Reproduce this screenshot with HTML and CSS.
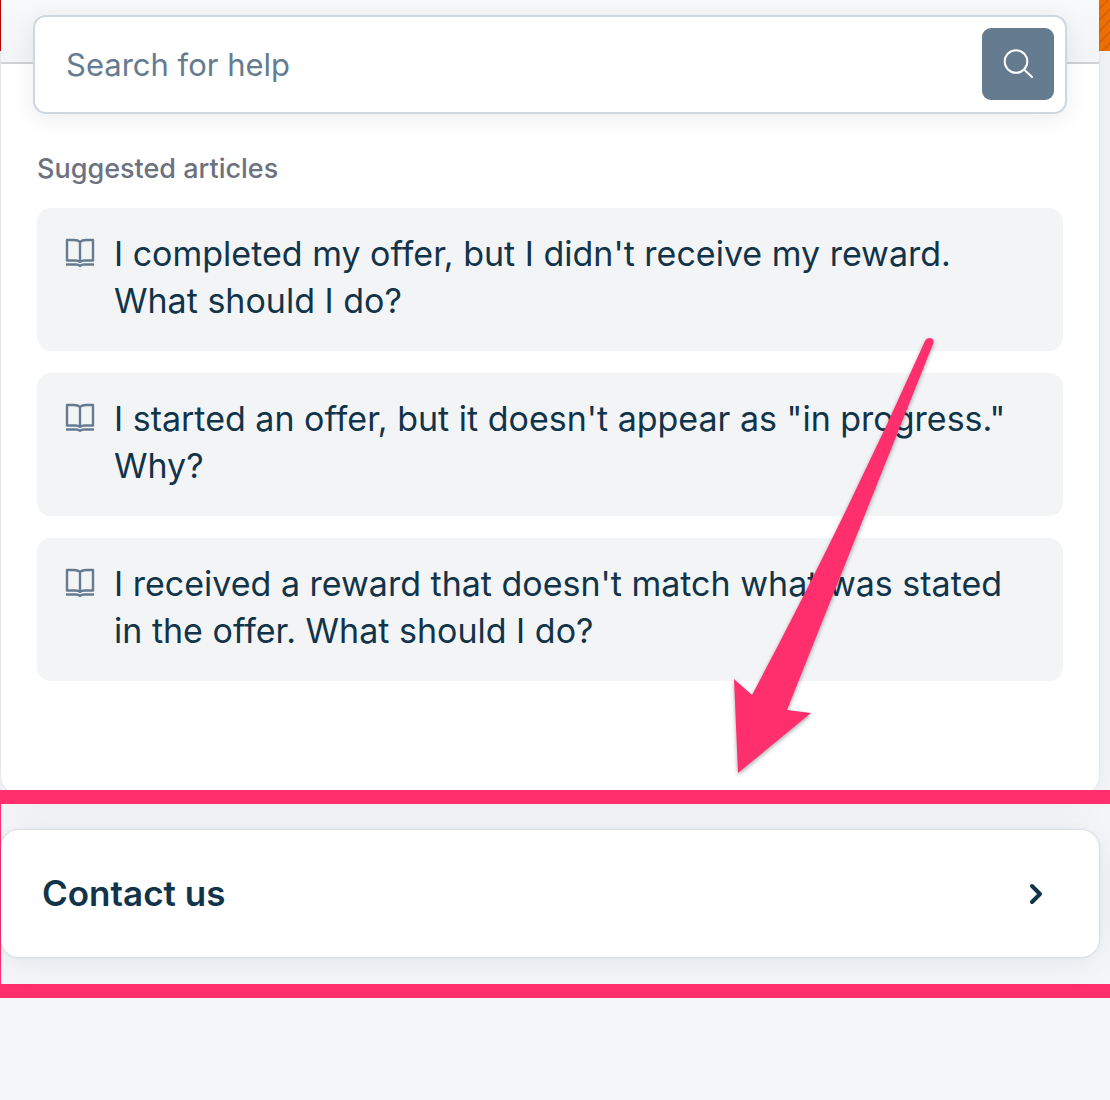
FILE: index.html
```html
<!DOCTYPE html>
<html lang="en">
<head>
    <meta charset="utf-8">
    <title>Help</title>
    <link rel="stylesheet" href="styles.css">
</head>
<body>
    <svg class="symbols" width="0" height="0" aria-hidden="true">
        <symbol id="book" viewBox="0 0 30 30">
            <path stroke-width="2.4" stroke-linejoin="round" d="M15 4C13 2 11 2 9 2H2V22.5H10C12 22.5 14 23 15 24C16 23 18 22.5 20 22.5H28V2H21C19 2 17 2 15 4ZM15 4V24M1 26.5H11C13 26.5 14 27 15 28C16 27 17 26.5 19 26.5H29"/>
        </symbol>
    </svg>
    <main class="page">
        <section class="panel">
            <div class="panel-head"></div>
            <form class="search">
                <input type="text" placeholder="Search for help" aria-label="Search for help">
                <button type="button" aria-label="Search">
                    <svg width="32" height="32" viewBox="0 0 32 32">
                        <circle cx="14" cy="13.5" r="11.3"/>
                        <path d="M22 21.5L30 29"/>
                    </svg>
                </button>
            </form>
            <div class="articles">
                <h2>Suggested articles</h2>
                <a class="article" href="#">
                    <svg class="book"><use href="#book"/></svg>
                    <span>I completed my offer, but I didn't receive my reward. What should I do?</span>
                </a>
                <a class="article" href="#">
                    <svg class="book"><use href="#book"/></svg>
                    <span>I started an offer, but it doesn't appear as "in progress." Why?</span>
                </a>
                <a class="article" href="#">
                    <svg class="book"><use href="#book"/></svg>
                    <span>I received a reward that doesn't match what was stated in the offer. What should I do?</span>
                </a>
            </div>
        </section>
        <section class="highlight">
            <a class="contact" href="#">
                <span>Contact us</span>
                <svg width="14" height="22" viewBox="0 0 14 22">
                    <path d="M3 3L11 11L3 19"/>
                </svg>
            </a>
        </section>
        <svg class="arrow" width="210" height="440" viewBox="0 0 210 440">
            <path d="M195 6C197 1 206 2 203 9L57 375L81 378L8 438L4 344L22 360Q116 183 195 6Z"/>
        </svg>
    </main>
</body>
</html>
```

FILE: styles.css
```css
* {
    box-sizing: border-box;
}
body {
    margin: 0;
    min-height: 100vh;
    font-family: Inter, "Liberation Sans", sans-serif;
    color: #12344a;
    background:
        linear-gradient(#c40009, #c40009) 0 0 / 1px 51px no-repeat,
        repeating-linear-gradient(135deg, #f27004 0, #f27004 5px, #d66005 6px, #f27004 8px) 100% 0 / 11px 51px no-repeat,
        #f5f6f8;
}
.symbols {
    display: none;
}
.page {
    position: relative;
}
.panel {
    margin: 0 11px 0 1px;
    padding-bottom: 113px;
    background-color: white;
    border-radius: 0 0 18px 18px;
    box-shadow: 0 0 2px rgba(18, 52, 74, 0.15), 0 4px 36px rgba(18, 72, 104, 0.08);
}
.panel-head {
    height: 64px;
    background: linear-gradient(#f8f9fa, #f3f4f5);
    border-bottom: 2px solid #d0d1d2;
}
.search {
    display: flex;
    align-items: flex-start;
    margin: -49px 32px 0;
    padding: 11px 11px 12px;
    background-color: white;
    border: 2px solid #cdd7e0;
    border-radius: 13px;
    box-shadow: 0 4px 24px rgba(0, 0, 0, 0.08);
    position: relative;
}
.search input {
    flex: 1;
    min-width: 0;
    height: 72px;
    padding: 0 20px;
    border: none;
    outline: none;
    background: none;
    font-family: inherit;
    font-size: 31px;
    color: #12344a;
}
.search input::placeholder {
    color: #657b90;
    opacity: 1;
}
.search button {
    display: flex;
    align-items: center;
    justify-content: center;
    width: 72px;
    height: 72px;
    padding: 0;
    border: none;
    border-radius: 9px;
    background-color: #657b90;
    cursor: pointer;
}
.search svg {
    fill: none;
    stroke: white;
    stroke-width: 2;
    stroke-linecap: round;
}
.articles {
    display: flex;
    flex-direction: column;
    gap: 22px;
    padding: 37px 36px 0;
}
.articles h2 {
    margin: 0;
    font-size: 27px;
    font-weight: 500;
    line-height: 35px;
    color: #6c7280;
}
.article {
    display: flex;
    gap: 19px;
    padding: 22px 28px 27px;
    background-color: #f2f4f6;
    border-radius: 14px;
    font-size: 34px;
    line-height: 47px;
    color: inherit;
    text-decoration: none;
}
.book {
    flex: none;
    width: 30px;
    height: 30px;
    margin-top: 8px;
    fill: none;
    stroke: #657b90;
}
.highlight {
    position: relative;
    margin-top: -4px;
    padding: 26px 11px 27px 0;
    border: solid #ff2f6d;
    border-width: 14px 0 14px 1px;
}
.contact {
    display: flex;
    align-items: center;
    justify-content: space-between;
    padding: 40px 56px 40px 41px;
    background-color: white;
    border-radius: 18px;
    box-shadow: 0 0 3px rgba(18, 52, 74, 0.2), 0 4px 36px rgba(18, 72, 104, 0.09);
    font-size: 35px;
    font-weight: 600;
    line-height: 47px;
    color: inherit;
    text-decoration: none;
}
.contact svg {
    fill: none;
    stroke: #12344a;
    stroke-width: 4;
    stroke-linecap: round;
    stroke-linejoin: round;
}
.arrow {
    position: absolute;
    top: 335px;
    left: 730px;
    overflow: visible;
    fill: #ff2f6d;
    filter: drop-shadow(0 2px 2px rgba(0, 0, 0, 0.35));
    pointer-events: none;
}
```
